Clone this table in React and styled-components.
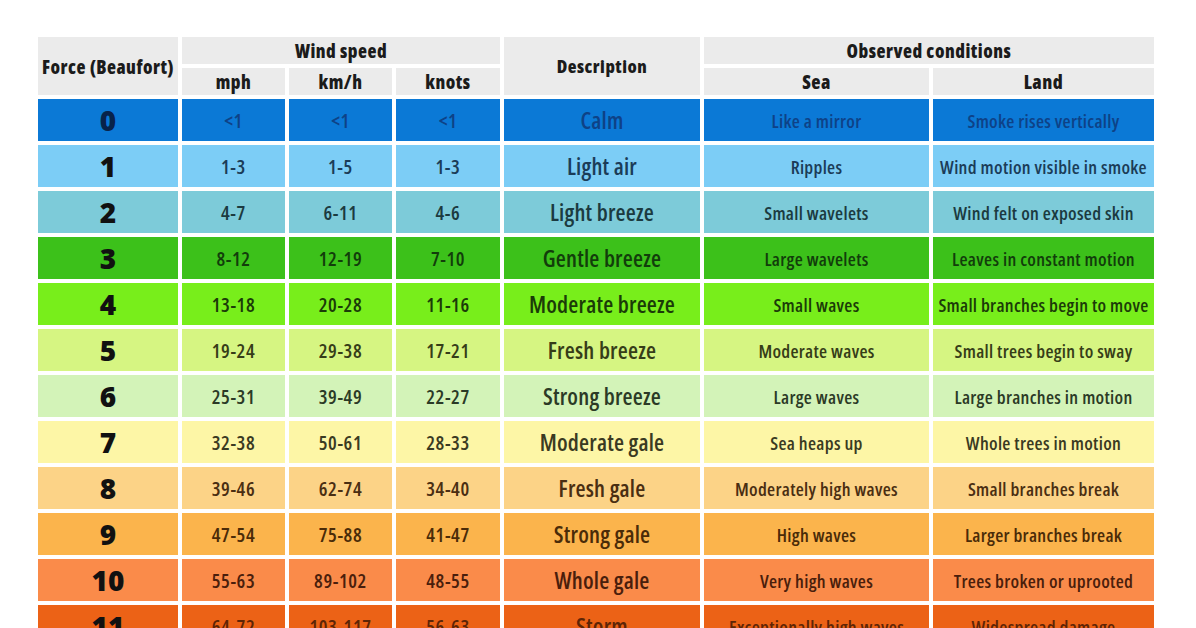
import React from "react";
import styled, { createGlobalStyle } from "styled-components";

const Global = createGlobalStyle`
  html, body { margin: 0; padding: 0; background: #ffffff; }
  body { font-family: "Open Sans", "Liberation Sans", sans-serif; }
`;

const Page = styled.div`
  width: 1196px;
  height: 628px;
  overflow: hidden;
  padding: 37px 0 0 38px;
  box-sizing: border-box;
  background: #fff;
`;

const Grid = styled.div`
  display: grid;
  grid-template-columns: 140px 103px 103px 104px 196px 225px 221px;
  grid-template-rows: 27px 27px repeat(12, 42px);
  gap: 4px;
`;

const Head = styled.div`
  background: #ebebeb;
  color: #1b1b1b;
  font-weight: 800;
  font-size: ${(p) => p.$size || 18.5}px;
  font-stretch: 80%;
  letter-spacing: 0.5px;
  display: flex;
  align-items: center;
  justify-content: center;
  grid-column: ${(p) => p.$col || "auto"};
  grid-row: ${(p) => p.$row || "auto"};
  white-space: nowrap;
`;

const Cell = styled.div`
  background: ${(p) => p.$bg};
  color: ${(p) => p.$fg};
  display: flex;
  align-items: center;
  justify-content: center;
  white-space: nowrap;
  font-size: 19.5px;
  font-weight: 600;
  font-stretch: 80%;
  letter-spacing: 0.6px;
`;

const Force = styled(Cell)`
  font-size: 28px;
  font-weight: 800;
  font-stretch: 100%;
  letter-spacing: 0;
  color: ${(p) => p.$fg};
`;

const Desc = styled(Cell)`
  font-size: 23px;
  font-weight: 600;
  font-stretch: 80%;
  letter-spacing: 0.2px;
`;

const Cond = styled(Cell)`
  font-size: 18.5px;
  font-weight: 600;
  font-stretch: 80%;
  letter-spacing: 0.3px;
`;

const rows = [
  ["0", "<1", "<1", "<1", "Calm", "Like a mirror", "Smoke rises vertically", "#0b79d6", "#0e4287", "#08234a"],
  ["1", "1-3", "1-5", "1-3", "Light air", "Ripples", "Wind motion visible in smoke", "#7ccdf6", "#1b3c58", "#111"],
  ["2", "4-7", "6-11", "4-6", "Light breeze", "Small wavelets", "Wind felt on exposed skin", "#7dcbd9", "#1b3a40", "#111"],
  ["3", "8-12", "12-19", "7-10", "Gentle breeze", "Large wavelets", "Leaves in constant motion", "#3cc11a", "#123d0b", "#111"],
  ["4", "13-18", "20-28", "11-16", "Moderate breeze", "Small waves", "Small branches begin to move", "#78ee1b", "#1b3b08", "#111"],
  ["5", "19-24", "29-38", "17-21", "Fresh breeze", "Moderate waves", "Small trees begin to sway", "#d6f582", "#363d18", "#111"],
  ["6", "25-31", "39-49", "22-27", "Strong breeze", "Large waves", "Large branches in motion", "#d3f3b8", "#2b3a26", "#111"],
  ["7", "32-38", "50-61", "28-33", "Moderate gale", "Sea heaps up", "Whole trees in motion", "#fdf6a6", "#3a3a22", "#111"],
  ["8", "39-46", "62-74", "34-40", "Fresh gale", "Moderately high waves", "Small branches break", "#fcd387", "#4a2e12", "#111"],
  ["9", "47-54", "75-88", "41-47", "Strong gale", "High waves", "Larger branches break", "#fbb44c", "#4a2b08", "#111"],
  ["10", "55-63", "89-102", "48-55", "Whole gale", "Very high waves", "Trees broken or uprooted", "#fa8b4a", "#4a1e0c", "#111"],
  ["11", "64-72", "103-117", "56-63", "Storm", "Exceptionally high waves", "Widespread damage", "#ec6216", "#5e2506", "#111"],
];

export default function App() {
  return (
    <Page>
      <Global />
      <Grid>
        <Head $col="1" $row="1 / span 2">Force (Beaufort)</Head>
        <Head $col="2 / span 3" $row="1">Wind speed</Head>
        <Head $col="5" $row="1 / span 2" $size={18}>Description</Head>
        <Head $col="6 / span 2" $row="1">Observed conditions</Head>
        <Head $col="2" $row="2">mph</Head>
        <Head $col="3" $row="2">km/h</Head>
        <Head $col="4" $row="2">knots</Head>
        <Head $col="6" $row="2" $size={19}>Sea</Head>
        <Head $col="7" $row="2" $size={19}>Land</Head>
        {rows.map((r) => {
          const [f, mph, kmh, kn, desc, sea, land, bg, fg, ffg] = r;
          return (
            <React.Fragment key={f}>
              <Force $bg={bg} $fg={ffg}>{f}</Force>
              <Cell $bg={bg} $fg={fg}>{mph}</Cell>
              <Cell $bg={bg} $fg={fg}>{kmh}</Cell>
              <Cell $bg={bg} $fg={fg}>{kn}</Cell>
              <Desc $bg={bg} $fg={fg}>{desc}</Desc>
              <Cond $bg={bg} $fg={fg}>{sea}</Cond>
              <Cond $bg={bg} $fg={fg}>{land}</Cond>
            </React.Fragment>
          );
        })}
      </Grid>
    </Page>
  );
}
